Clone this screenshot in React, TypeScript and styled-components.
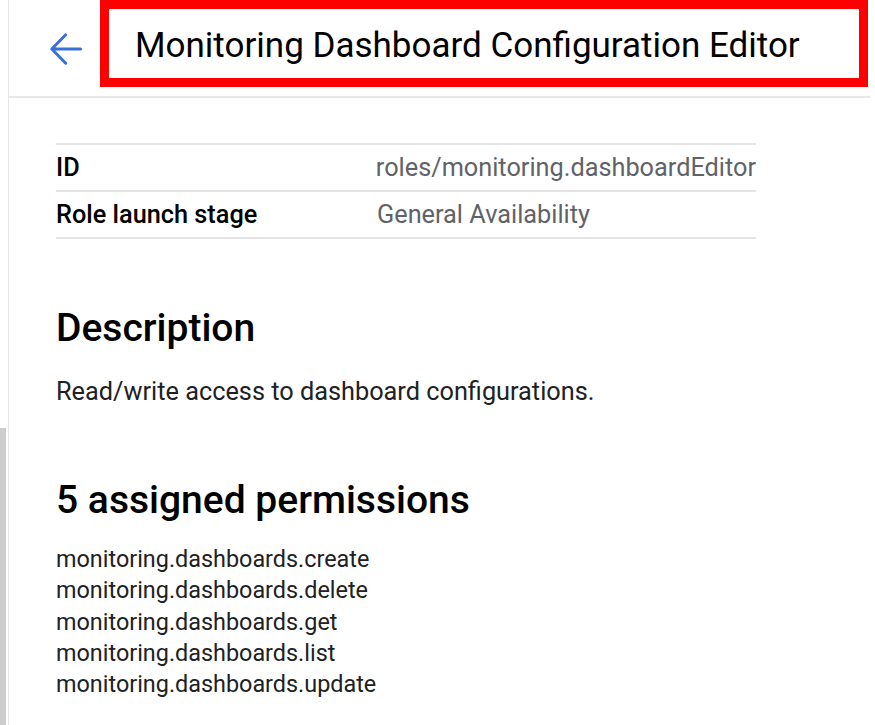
import styled, { createGlobalStyle } from "styled-components";

const GlobalStyle = createGlobalStyle`
  html, body {
    margin: 0;
    padding: 0;
    background: #ffffff;
  }
  body {
    font-family: Roboto, "Noto Sans", "Liberation Sans", sans-serif;
    color: #202124;
  }
`;

const Page = styled.div`
  display: flex;
  width: 875px;
  height: 725px;
  overflow: hidden;
`;

// left edge: thin rule plus a grey scroll thumb
const Rail = styled.div`
  width: 8px;
  flex: none;
  display: flex;
  flex-direction: column;
  border-right: 1px solid #e6e6e6;
`;
const RailGap = styled.div`
  height: 428px;
`;
const RailThumb = styled.div`
  flex: 1;
  width: 6px;
  background: #cdcdcd;
`;

const Main = styled.div`
  flex: 1;
  margin-right: 5px;
  display: flex;
  flex-direction: column;
`;

const Header = styled.div`
  height: 96px;
  display: flex;
  align-items: flex-start;
  border-bottom: 2px solid #e8e8e8;
`;
const BackButton = styled.button`
  margin: 26px 0 0 33px;
  padding: 0;
  width: 48px;
  height: 46px;
  border: none;
  background: none;
  color: #3b6fd8;
  cursor: pointer;
  display: flex;
  align-items: center;
  justify-content: center;
`;
const TitleBox = styled.div`
  box-sizing: border-box;
  margin-left: 10px;
  width: 768px;
  height: 87px;
  border: 9px solid #ff0000;
  padding: 3px 0 0 26px;
  display: flex;
  align-items: center;
`;
const Title = styled.h1`
  margin: 0;
  font-size: 35px;
  font-weight: 400;
  color: #000000;
  white-space: nowrap;
`;

const Content = styled.div`
  padding-left: 47px;
`;

const InfoTable = styled.div`
  width: 700px;
  margin-top: 45px;
  border-bottom: 2px solid #e4e4e4;
`;
const InfoRow = styled.div`
  display: flex;
  align-items: center;
  height: 45px;
  border-top: 2px solid #e4e4e4;
  font-size: 25.3px;
`;
const InfoLabel = styled.div`
  width: 321px;
  font-weight: 500;
  color: #000000;
`;
const InfoValue = styled.div`
  color: #5f6368;
  white-space: nowrap;
`;

const SectionTitle = styled.h2<{ $gap: number }>`
  margin: ${(p) => p.$gap}px 0 0;
  font-size: 39px;
  line-height: 48px;
  font-weight: 500;
  color: #000000;
`;

const Paragraph = styled.p`
  margin: 24px 0 0;
  font-size: 25.3px;
  line-height: 32px;
  color: #202124;
`;

const PermList = styled.ul`
  list-style: none;
  margin: 20px 0 0;
  padding: 0;
`;
const PermItem = styled.li`
  font-size: 23.4px;
  line-height: 31.25px;
  color: #202124;
`;

const permissions = [
  "monitoring.dashboards.create",
  "monitoring.dashboards.delete",
  "monitoring.dashboards.get",
  "monitoring.dashboards.list",
  "monitoring.dashboards.update",
];

function App() {
  return (
    <>
      <GlobalStyle />
      <Page>
        <Rail>
          <RailGap />
          <RailThumb />
        </Rail>
        <Main>
          <Header>
            <BackButton aria-label="Back">
              <svg width="36" height="36" viewBox="0 0 24 24" fill="none">
                <path
                  d="M21.7 12H2.5M11.8 2.5L2.5 12l9.3 9.5"
                  stroke="currentColor"
                  strokeWidth="2"
                  strokeLinecap="round"
                  strokeLinejoin="round"
                />
              </svg>
            </BackButton>
            <TitleBox>
              <Title>Monitoring Dashboard Configuration Editor</Title>
            </TitleBox>
          </Header>
          <Content>
            <InfoTable>
              <InfoRow>
                <InfoLabel>ID</InfoLabel>
                <InfoValue>roles/monitoring.dashboardEditor</InfoValue>
              </InfoRow>
              <InfoRow>
                <InfoLabel>Role launch stage</InfoLabel>
                <InfoValue>General Availability</InfoValue>
              </InfoRow>
            </InfoTable>

            <SectionTitle $gap={65}>Description</SectionTitle>
            <Paragraph>Read/write access to dashboard configurations.</Paragraph>

            <SectionTitle $gap={68}>5 assigned permissions</SectionTitle>
            <PermList>
              {permissions.map((p) => (
                <PermItem key={p}>{p}</PermItem>
              ))}
            </PermList>
          </Content>
        </Main>
      </Page>
    </>
  );
}

export default App;
